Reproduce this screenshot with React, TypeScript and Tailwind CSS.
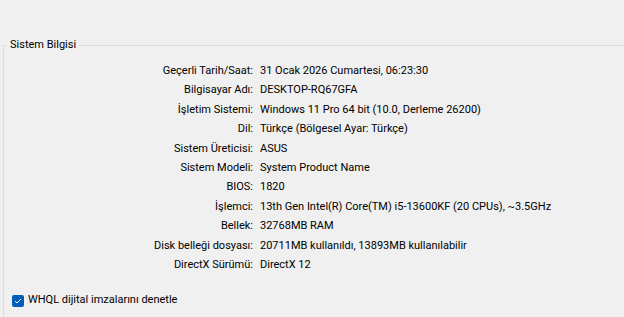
import React from "react";

const rows: [string, string][] = [
  ["Geçerli Tarih/Saat:", "31 Ocak 2026 Cumartesi, 06:23:30"],
  ["Bilgisayar Adı:", "DESKTOP-RQ67GFA"],
  ["İşletim Sistemi:", "Windows 11 Pro 64 bit (10.0, Derleme 26200)"],
  ["Dil:", "Türkçe (Bölgesel Ayar: Türkçe)"],
  ["Sistem Üreticisi:", "ASUS"],
  ["Sistem Modeli:", "System Product Name"],
  ["BIOS:", "1820"],
  ["İşlemci:", "13th Gen Intel(R) Core(TM) i5-13600KF (20 CPUs), ~3.5GHz"],
  ["Bellek:", "32768MB RAM"],
  ["Disk belleği dosyası:", "20711MB kullanıldı, 13893MB kullanılabilir"],
  ["DirectX Sürümü:", "DirectX 12"],
];

export default function App() {
  return (
    <div className="w-[624px] h-[317px] overflow-hidden bg-[#f0f0f0] text-[11px] text-black font-['Roboto',sans-serif]">
      <fieldset className="mt-[38px] ml-[3px] pl-[3px] border-t border-l border-[#dcdcdc] h-[290px]">
        <legend className="px-[3px] leading-[14px]">Sistem Bilgisi</legend>

        {/* Info rows */}
        <div className="mt-[9px] grid grid-cols-[246px_auto] gap-x-[7px] leading-[19.4px]">
          {rows.map(([label, value]) => (
            <React.Fragment key={label}>
              <span className="text-right whitespace-nowrap">{label}</span>
              <span className="whitespace-nowrap">{value}</span>
            </React.Fragment>
          ))}
        </div>

        {/* Checkbox */}
        <label className="mt-[18px] ml-[5px] flex items-center gap-[4px]">
          <span className="w-[12px] h-[12px] rounded-[2px] bg-[#005fb8] flex items-center justify-center">
            <svg width="8" height="8" viewBox="0 0 8 8" fill="none">
              <path d="M1 4.2 L3 6 L7 2" stroke="white" strokeWidth="1" />
            </svg>
          </span>
          <span>WHQL dijital imzalarını denetle</span>
        </label>
      </fieldset>
    </div>
  );
}
